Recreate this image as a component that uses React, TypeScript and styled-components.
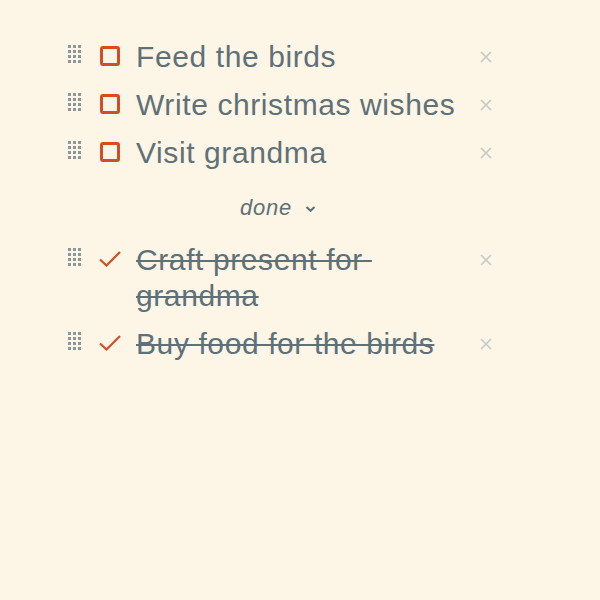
import React from "react";
import styled, { createGlobalStyle } from "styled-components";

const GlobalStyle = createGlobalStyle`
  html, body {
    margin: 0;
    padding: 0;
    background: #fdf5e5;
  }
  body {
    font-family: "Liberation Sans", Arial, sans-serif;
  }
`;

const Page = styled.div`
  width: 600px;
  height: 600px;
  background: #fdf5e5;
  padding: 39px 0 0 68px;
  box-sizing: border-box;
`;

const List = styled.div`
  width: 428px;
  display: flex;
  flex-direction: column;
  gap: 12px;
`;

const Row = styled.div`
  display: flex;
  align-items: flex-start;
`;

const Grip = styled.div`
  width: 13px;
  margin: 6px 19px 0 0;
  display: grid;
  grid-template-columns: repeat(3, 3px);
  grid-auto-rows: 3px;
  gap: 2px;
  flex-shrink: 0;
`;

const Dot = styled.span`
  width: 3px;
  height: 3px;
  background: #8a979b;
`;

const Box = styled.div`
  width: 20px;
  height: 20px;
  box-sizing: border-box;
  border: 3px solid #d24f26;
  border-radius: 3px;
  margin: 7px 16px 0 0;
  flex-shrink: 0;
`;

const Check = styled.svg`
  width: 24px;
  height: 18px;
  margin: 8px 14px 0 -2px;
  flex-shrink: 0;
`;

const Label = styled.div<{ $done?: boolean }>`
  flex: 1;
  font-size: 30px;
  line-height: 36px;
  letter-spacing: 0.6px;
  color: #5e7179;
  text-decoration: ${(p) => (p.$done ? "line-through" : "none")};
  text-decoration-thickness: 2px;
  padding-right: 10px;
`;

const Remove = styled.svg`
  width: 12px;
  height: 12px;
  margin: 12px 4px 0 0;
  flex-shrink: 0;
`;

const DoneToggle = styled.div`
  margin: 13px 0 10px 0;
  height: 24px;
  display: flex;
  justify-content: center;
  align-items: center;
  gap: 13px;
  padding-right: 8px;
  font-size: 22px;
  font-style: italic;
  letter-spacing: 0.8px;
  color: #5e7179;
`;

const Chevron = styled.svg`
  width: 11px;
  height: 8px;
  margin-top: 1px;
`;

const GripIcon = () => (
  <Grip>
    {Array.from({ length: 12 }).map((_, i) => (
      <Dot key={i} />
    ))}
  </Grip>
);

const X = () => (
  <Remove viewBox="0 0 12 12">
    <path d="M1 1L11 11M11 1L1 11" stroke="#c3cbc4" strokeWidth="1.6" />
  </Remove>
);

const todo = ["Feed the birds", "Write christmas wishes", "Visit grandma"];

export default function App() {
  return (
    <>
      <GlobalStyle />
      <Page>
        <List>
          {todo.map((t) => (
            <Row key={t}>
              <GripIcon />
              <Box />
              <Label>{t}</Label>
              <X />
            </Row>
          ))}
          <DoneToggle>
            <span>done</span>
            <Chevron viewBox="0 0 11 8">
              <path d="M1.5 2L5.5 5.8L9.5 2" fill="none" stroke="#5e7179" strokeWidth="2" />
            </Chevron>
          </DoneToggle>
          <Row>
            <GripIcon />
            <Check viewBox="0 0 24 18">
              <path d="M2 9.5L8.5 15.5L22 2" fill="none" stroke="#d24f26" strokeWidth="2.2" />
            </Check>
            <Label $done>
              Craft present for{"\u00a0"}
              <wbr />
              grandma
            </Label>
            <X />
          </Row>
          <Row>
            <GripIcon />
            <Check viewBox="0 0 24 18">
              <path d="M2 9.5L8.5 15.5L22 2" fill="none" stroke="#d24f26" strokeWidth="2.2" />
            </Check>
            <Label $done>Buy food for the birds</Label>
            <X />
          </Row>
        </List>
      </Page>
    </>
  );
}
